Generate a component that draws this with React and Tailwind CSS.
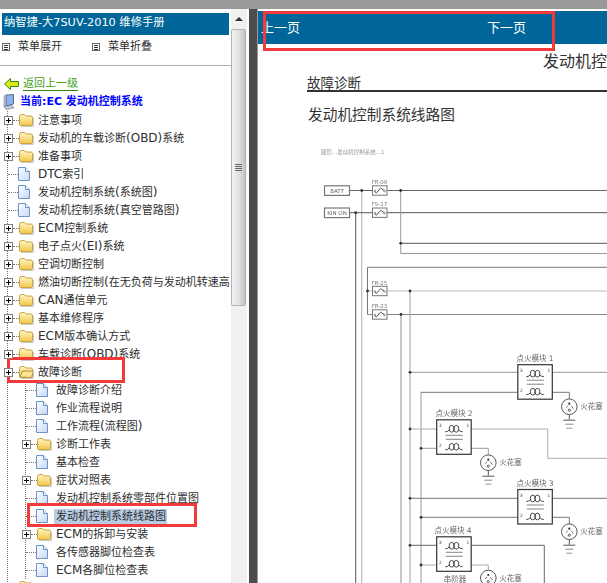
import React from "react";

const Expander = () => (
  <span className="relative z-10 -ml-[4px] flex h-[9px] w-[9px] shrink-0 items-center justify-center border border-[#808080] bg-white">
    <span className="absolute h-px w-[5px] bg-black" />
    <span className="absolute h-[5px] w-px bg-black" />
  </span>
);

const Folder = ({ open }) => (
  <svg width="15" height="14" viewBox="0 0 15 14" className="shrink-0">
    <defs>
      <linearGradient id="fg" x1="0" y1="0" x2="0" y2="1">
        <stop offset="0" stopColor="#fff6c8" />
        <stop offset="1" stopColor="#f3c648" />
      </linearGradient>
    </defs>
    <path d="M0.5 3.5 Q0.5 1.5 2.5 1.5 H5.5 L7 3 H12 Q13.5 3 13.5 4.5 V11.5 Q13.5 12.5 12.5 12.5 H1.5 Q0.5 12.5 0.5 11.5 Z" fill="url(#fg)" stroke="#c9a238" />
    {open ? <path d="M1 12 L3.5 6 H14.5 L12.5 12.5 Z" fill="#fbe697" stroke="#b48f28" /> : null}
    <path d="M14.4 5 V13.4 H2" fill="none" stroke="#c8c8c8" />
  </svg>
);

const Doc = () => (
  <svg width="12" height="14" viewBox="0 0 12 14" className="shrink-0">
    <defs>
      <linearGradient id="dg" x1="0" y1="0" x2="1" y2="1">
        <stop offset="0" stopColor="#ffffff" />
        <stop offset="1" stopColor="#c4d8f4" />
      </linearGradient>
    </defs>
    <path d="M0.5 0.5 H7.5 L11.5 4.5 V13.5 H0.5 Z" fill="url(#dg)" stroke="#6f93c8" />
    <path d="M7.5 0.5 V4.5 H11.5" fill="#eef4fc" stroke="#6f93c8" />
  </svg>
);

const Label = ({ text }) =>
  text.split(/([A-Za-z()]+)/).map((part, i) =>
    i % 2 === 1 ? (
      <span key={i} className="text-[12px]">{part}</span>
    ) : (
      part
    )
  );

const Row = ({ kind, text, selected, open, children }) => (
  <div className="relative flex h-[18px] items-center">
    {kind === "folder" ? <Expander /> : null}
    <span className={`h-0 shrink-0 border-t border-dotted border-[#777] ${kind === "folder" ? "w-[6px]" : "w-[10px]"}`} />
    {kind === "folder" ? <Folder open={open} /> : <Doc />}
    <span
      className={`whitespace-nowrap text-[11px] leading-[15px] text-[#2e2e2e] ${kind === "folder" ? "ml-[4px]" : selected ? "ml-[6px] bg-[#b8cce4] pl-[2px] pr-px" : "ml-[8px]"}`}
    >
      <Label text={text} />
    </span>
    {children}
  </div>
);

const top = [
  ["folder", "注意事项"],
  ["folder", "发动机的车载诊断(OBD)系统"],
  ["folder", "准备事项"],
  ["doc", "DTC索引"],
  ["doc", "发动机控制系统(系统图)"],
  ["doc", "发动机控制系统(真空管路图)"],
  ["folder", "ECM控制系统"],
  ["folder", "电子点火(EI)系统"],
  ["folder", "空调切断控制"],
  ["folder", "燃油切断控制(在无负荷与发动机转速高"],
  ["folder", "CAN通信单元"],
  ["folder", "基本维修程序"],
  ["folder", "ECM版本确认方式"],
  ["folder", "车载诊断(OBD)系统"],
];

const sub = [
  ["doc", "故障诊断介绍"],
  ["doc", "作业流程说明"],
  ["doc", "工作流程(流程图)"],
  ["folder", "诊断工作表"],
  ["doc", "基本检查"],
  ["folder", "症状对照表"],
  ["doc", "发动机控制系统零部件位置图"],
  ["doc", "发动机控制系统线路图", true],
  ["folder", "ECM的拆卸与安装"],
  ["doc", "各传感器脚位检查表"],
  ["doc", "ECM各脚位检查表"],
];

const MenuIcon = () => (
  <span className="flex h-[8px] w-[8px] shrink-0 flex-col items-center justify-center gap-px border border-[#666] bg-white">
    <span className="h-px w-[4px] bg-[#333]" />
    <span className="h-px w-[4px] bg-[#333]" />
    <span className="h-px w-[4px] bg-[#333]" />
  </span>
);

const Sidebar = () => (
  <div className="w-[231px] shrink-0 overflow-hidden bg-white pt-[4px]">
    <div className="mx-[2px] h-[22px] whitespace-nowrap bg-[#006699] pl-[2px] text-[11.3px] leading-[20px] text-white">
      纳智捷-大7SUV-2010 维修手册
    </div>
    <div className="flex h-[31px] items-start border-b border-[#b0b0b0] pl-[2px] pt-[4px]">
      <div className="flex h-[16px] w-[90px] items-center gap-[8px] text-[11px] text-[#2e2e2e]">
        <MenuIcon />
        <span>菜单展开</span>
      </div>
      <div className="flex h-[16px] items-center gap-[8px] text-[11px] text-[#2e2e2e]">
        <MenuIcon />
        <span>菜单折叠</span>
      </div>
    </div>
    <div className="mt-[9px] flex h-[18px] items-center pl-[4px]">
      <svg width="15" height="12" viewBox="0 0 15 12" className="shrink-0">
        <path d="M0.5 6 L6.5 0.5 V3.5 H14.5 V8.5 H6.5 V11.5 Z" fill="#dce81c" stroke="#2f8a10" />
      </svg>
      <a className="ml-[4px] whitespace-nowrap border-b border-[#2f8a10] text-[11px] leading-[13px] text-[#45a020]">返回上一级</a>
    </div>
    <div className="flex h-[18px] items-center pl-[3px]">
      <svg width="12" height="16" viewBox="0 0 12 16" className="shrink-0">
        <path d="M3 1 L10.5 0.5 V10 L3 12 Z" fill="#8fb0e8" stroke="#5a6f98" />
        <path d="M1 2 L3 1 V12 L1 12.5 Z" fill="#b9c3d6" stroke="#7b879c" strokeWidth="0.6" />
        <path d="M1 12.5 L9 11.5 L11 14 L3 15.5 Z" fill="#c8ccd4" stroke="#6f7480" strokeWidth="0.6" />
      </svg>
      <span className="ml-[5px] whitespace-nowrap text-[11px] font-bold text-[#0000ff]">当前:EC 发动机控制系统</span>
    </div>
    <div className="ml-[7px] border-l border-dotted border-[#777]">
      {top.map(([k, t]) => (
        <Row key={t} kind={k} text={t} />
      ))}
      <Row kind="folder" text="故障诊断" open>
        <span className="absolute left-[-1px] top-[-6px] h-[26px] w-[118px] border-[3px] border-[#f33a3a]" />
      </Row>
      <div className="ml-[17px] border-l border-dotted border-[#777] mb-[-1px]">
        {sub.map(([k, t, s]) => (
          <Row key={t} kind={k} text={t} selected={s}>
            {s ? <span className="absolute left-[1px] top-[-4px] h-[24px] w-[170px] border-[3px] border-[#f33a3a]" /> : null}
          </Row>
        ))}
      </div>
      <Row kind="folder" text="" />
    </div>
  </div>
);

const Scrollbar = () => (
  <div className="flex w-[16px] shrink-0 flex-col bg-[#f0f0f0]">
    <div className="flex h-[20px] items-center justify-center">
      <span className="h-0 w-0 border-x-[4px] border-b-[4px] border-x-transparent border-b-[#333]" />
    </div>
    <div className="flex h-[277px] w-[15px] items-center justify-center rounded-[2px] border border-[#b4b4b4] bg-gradient-to-r from-[#f2f2f2] via-[#e2e2e2] to-[#c4c4c4]">
      <div className="flex w-[7px] flex-col gap-px">
        <span className="h-px bg-[#666]" />
        <span className="h-px bg-[#666]" />
        <span className="h-px bg-[#666]" />
        <span className="h-px bg-[#666]" />
      </div>
    </div>
  </div>
);

const L = ({ d, c = "#777", w = 1 }) => <path d={d} fill="none" stroke={c} strokeWidth={w} />;
const Dot = ({ x, y }) => <circle cx={x} cy={y} r="1.4" fill="#333" />;

const Fuse = ({ y, label }) => (
  <g>
    <text x="379.5" y={y - 6.5} fontSize="5.5" fill="#777" textAnchor="middle">{label}</text>
    <rect x="372.5" y={y - 4.7} width="14.5" height="9.4" fill="#fff" stroke="#777" />
    <path d={`M375 ${y + 1.5} q1.5 1.5 2.5 0 l2 -3 q1 -1.5 2.5 0 q1 1 2 1`} fill="none" stroke="#555" />
    <circle cx="375" cy={y + 0.5} r="0.9" fill="none" stroke="#555" strokeWidth="0.6" />
    <circle cx="384.5" cy={y + 0.5} r="0.9" fill="none" stroke="#555" strokeWidth="0.6" />
  </g>
);

const Tag = ({ y, label }) => (
  <g>
    <rect x="324.5" y={y - 4.7} width="25" height="9.6" fill="#fff" stroke="#777" strokeWidth="1.2" />
    <text x="337" y={y + 2} fontSize="5.5" fill="#666" textAnchor="middle">{label}</text>
  </g>
);

const Coil = ({ y }) => (
  <g fill="none" stroke="#333" strokeWidth="0.9">
    <path d={`M8.5 ${y + 3} q3 0 4 -2`} />
    <ellipse cx="15" cy={y} rx="2.5" ry="3.4" />
    <ellipse cx="19.6" cy={y} rx="2.5" ry="3.4" />
    <path d={`M22 ${y + 1} q1 2 4 2`} />
  </g>
);

const Module = ({ x, y, n, lx }) => (
  <g>
    <text x={lx} y={y - 3.5} fontSize="7.5" fill="#666" textAnchor="middle">点火模块 {n}</text>
    <g transform={`translate(${x} ${y})`}>
      <rect x="0" y="0" width="34.5" height="34.5" fill="#fff" stroke="#333" strokeWidth="1.2" />
      <Coil y={9} />
      <path d="M9 15.5 H26 M9 19.5 H26" stroke="#777" strokeWidth="0.9" />
      <Coil y={27} />
      <text x="2" y="7" fontSize="4.5" fill="#333">3</text>
      <text x="29.5" y="7" fontSize="4.5" fill="#333">1</text>
      <text x="2" y="27" fontSize="4.5" fill="#333">2</text>
    </g>
  </g>
);

const Plug = ({ x, y }) => (
  <g>
    <circle cx={x} cy={y} r="7.8" fill="#fff" stroke="#555" />
    <circle cx={x} cy={y - 3} r="1.1" fill="#333" />
    <circle cx={x} cy={y + 3.5} r="1.1" fill="none" stroke="#333" strokeWidth="0.8" />
    <path d={`M${x + 2} ${y - 1} l2 3 M${x - 3} ${y + 1} l1.5 -2`} stroke="#555" strokeWidth="0.8" />
    <L d={`M${x} ${y + 8} V${y + 13}`} c="#555" />
    <L d={`M${x - 6} ${y + 13.5} H${x + 6}`} c="#555" />
    <L d={`M${x - 4} ${y + 17.5} H${x + 4}`} c="#888" />
    <L d={`M${x - 3} ${y + 21.5} H${x + 3}`} c="#999" />
    <text x={x + 11} y={y + 2.5} fontSize="7.5" fill="#666">火花塞</text>
  </g>
);

const Diagram = () => (
  <svg width="297" height="438" viewBox="310 145 297 438" className="ml-[52px] block shrink-0 blur-[0.4px]">
    <text x="321" y="153.5" fontSize="5.5" fill="#999">閥形...发动机控制系统...1</text>
    <L d="M355.7 212.7 V583" c="#555" />
    <L d="M361.7 190.5 V583" c="#bbb" w="1.2" />
    <L d="M349 190.5 H607" c="#666" />
    <L d="M349 212.7 H607" c="#555" />
    <L d="M400.7 190.5 V253.5 H607" c="#999" />
    <L d="M400.7 243.3 H607" c="#555" />
    <L d="M367.5 314.5 V267.3 H607" c="#777" />
    <L d="M367.5 291 H607" c="#bbb" w="1.2" />
    <L d="M367.5 314.5 H607" c="#888" />
    <L d="M401 314.5 V583" c="#999" w="1.1" />
    <L d="M410 291 V583" c="#aaa" w="1.1" />
    <L d="M421 392.3 V583" c="#999" />
    <L d="M410 372.3 H607" c="#999" />
    <L d="M421 392.3 H518 M552 392.3 H569.3 V400" c="#777" />
    <L d="M410 429 H437 M471 429 H547.7 V458.3 H607" c="#aaa" />
    <L d="M421 448.3 H437 M471 448.3 H488.3 V456" c="#999" />
    <L d="M410 498.3 H607" c="#777" />
    <L d="M421 517.3 H518 M552 517.3 H569.3 V525" c="#777" />
    <L d="M410 545.3 H437 M471 545.3 H544.3 V583" c="#666" />
    <L d="M421 565 H437 M471 565 H488.3 V572" c="#aaa" />
    <Dot x="361.7" y="190.5" />
    <Dot x="355.7" y="212.7" />
    <Dot x="400.7" y="190.5" />
    <Dot x="400.7" y="243.3" />
    <Dot x="367.5" y="291" />
    <Dot x="410" y="291" />
    <Dot x="401" y="314.5" />
    {[372.3, 429, 498.3, 545.3].map((y) => <Dot key={y} x="410" y={y} />)}
    {[448.3, 517.3, 565].map((y) => <Dot key={y} x="421" y={y} />)}
    <Tag y={190.5} label="BATT" />
    <Tag y={212.7} label="KIN ON" />
    <Fuse y={190.5} label="FR-09" />
    <Fuse y={212.7} label="FS-17" />
    <Fuse y={291} label="FR-25" />
    <Fuse y={314.5} label="FR-23" />
    <Module x={517.8} y={364.7} n="1" lx={535} />
    <Module x={436.7} y={419.8} n="2" lx={454} />
    <Module x={517.8} y={489.5} n="3" lx={535} />
    <Module x={436.7} y={536.8} n="4" lx={453} />
    <Plug x={569.3} y={406.7} />
    <Plug x={488.3} y={462.7} />
    <Plug x={569.3} y={531.7} />
    <Plug x={488.3} y={578} />
    <text x="455" y="582" fontSize="7.5" fill="#666" textAnchor="middle">串阶器</text>
  </svg>
);

const Content = () => (
  <div className="min-w-0 flex-1 overflow-hidden bg-white pt-[2px]">
    <div className="relative flex h-[33px] items-center bg-[#006699] text-[13px] text-white">
      <span className="ml-[3px] w-[226px] whitespace-nowrap">上一页</span>
      <span className="whitespace-nowrap">下一页</span>
      <span className="absolute left-[5px] top-0 h-[40px] w-[292px] border-[3px] border-[#f33a3a]" />
    </div>
    <div className="mt-[9px] h-[18px] whitespace-nowrap pl-[285px] text-[16px] leading-[18px] text-[#333]">发动机控制系统线路图</div>
    <div className="ml-[49px] mt-[3px] h-[18px] whitespace-nowrap border-b-2 border-[#333] text-[13.5px] leading-[18px] text-[#333]">故障诊断</div>
    <div className="ml-[50px] mt-[13px] h-[20px] whitespace-nowrap text-[14.7px] leading-[20px] text-[#333]">发动机控制系统线路图</div>
    <div className="mt-[20px]">
      <Diagram />
    </div>
  </div>
);

export default function App() {
  return (
    <div className="flex h-[583px] w-[607px] flex-col overflow-hidden bg-white font-['DejaVu_Sans','Noto_Sans_CJK_SC',sans-serif]">
      <div className="h-[9px] shrink-0 bg-[#999999]" />
      <div className="flex min-h-0 flex-1">
        <Sidebar />
        <Scrollbar />
        <div className="w-[2px] shrink-0 bg-white" />
        <div className="w-[8px] shrink-0 bg-[#4d4d4d]" />
        <div className="w-px shrink-0 bg-[#999999]" />
        <Content />
      </div>
    </div>
  );
}
